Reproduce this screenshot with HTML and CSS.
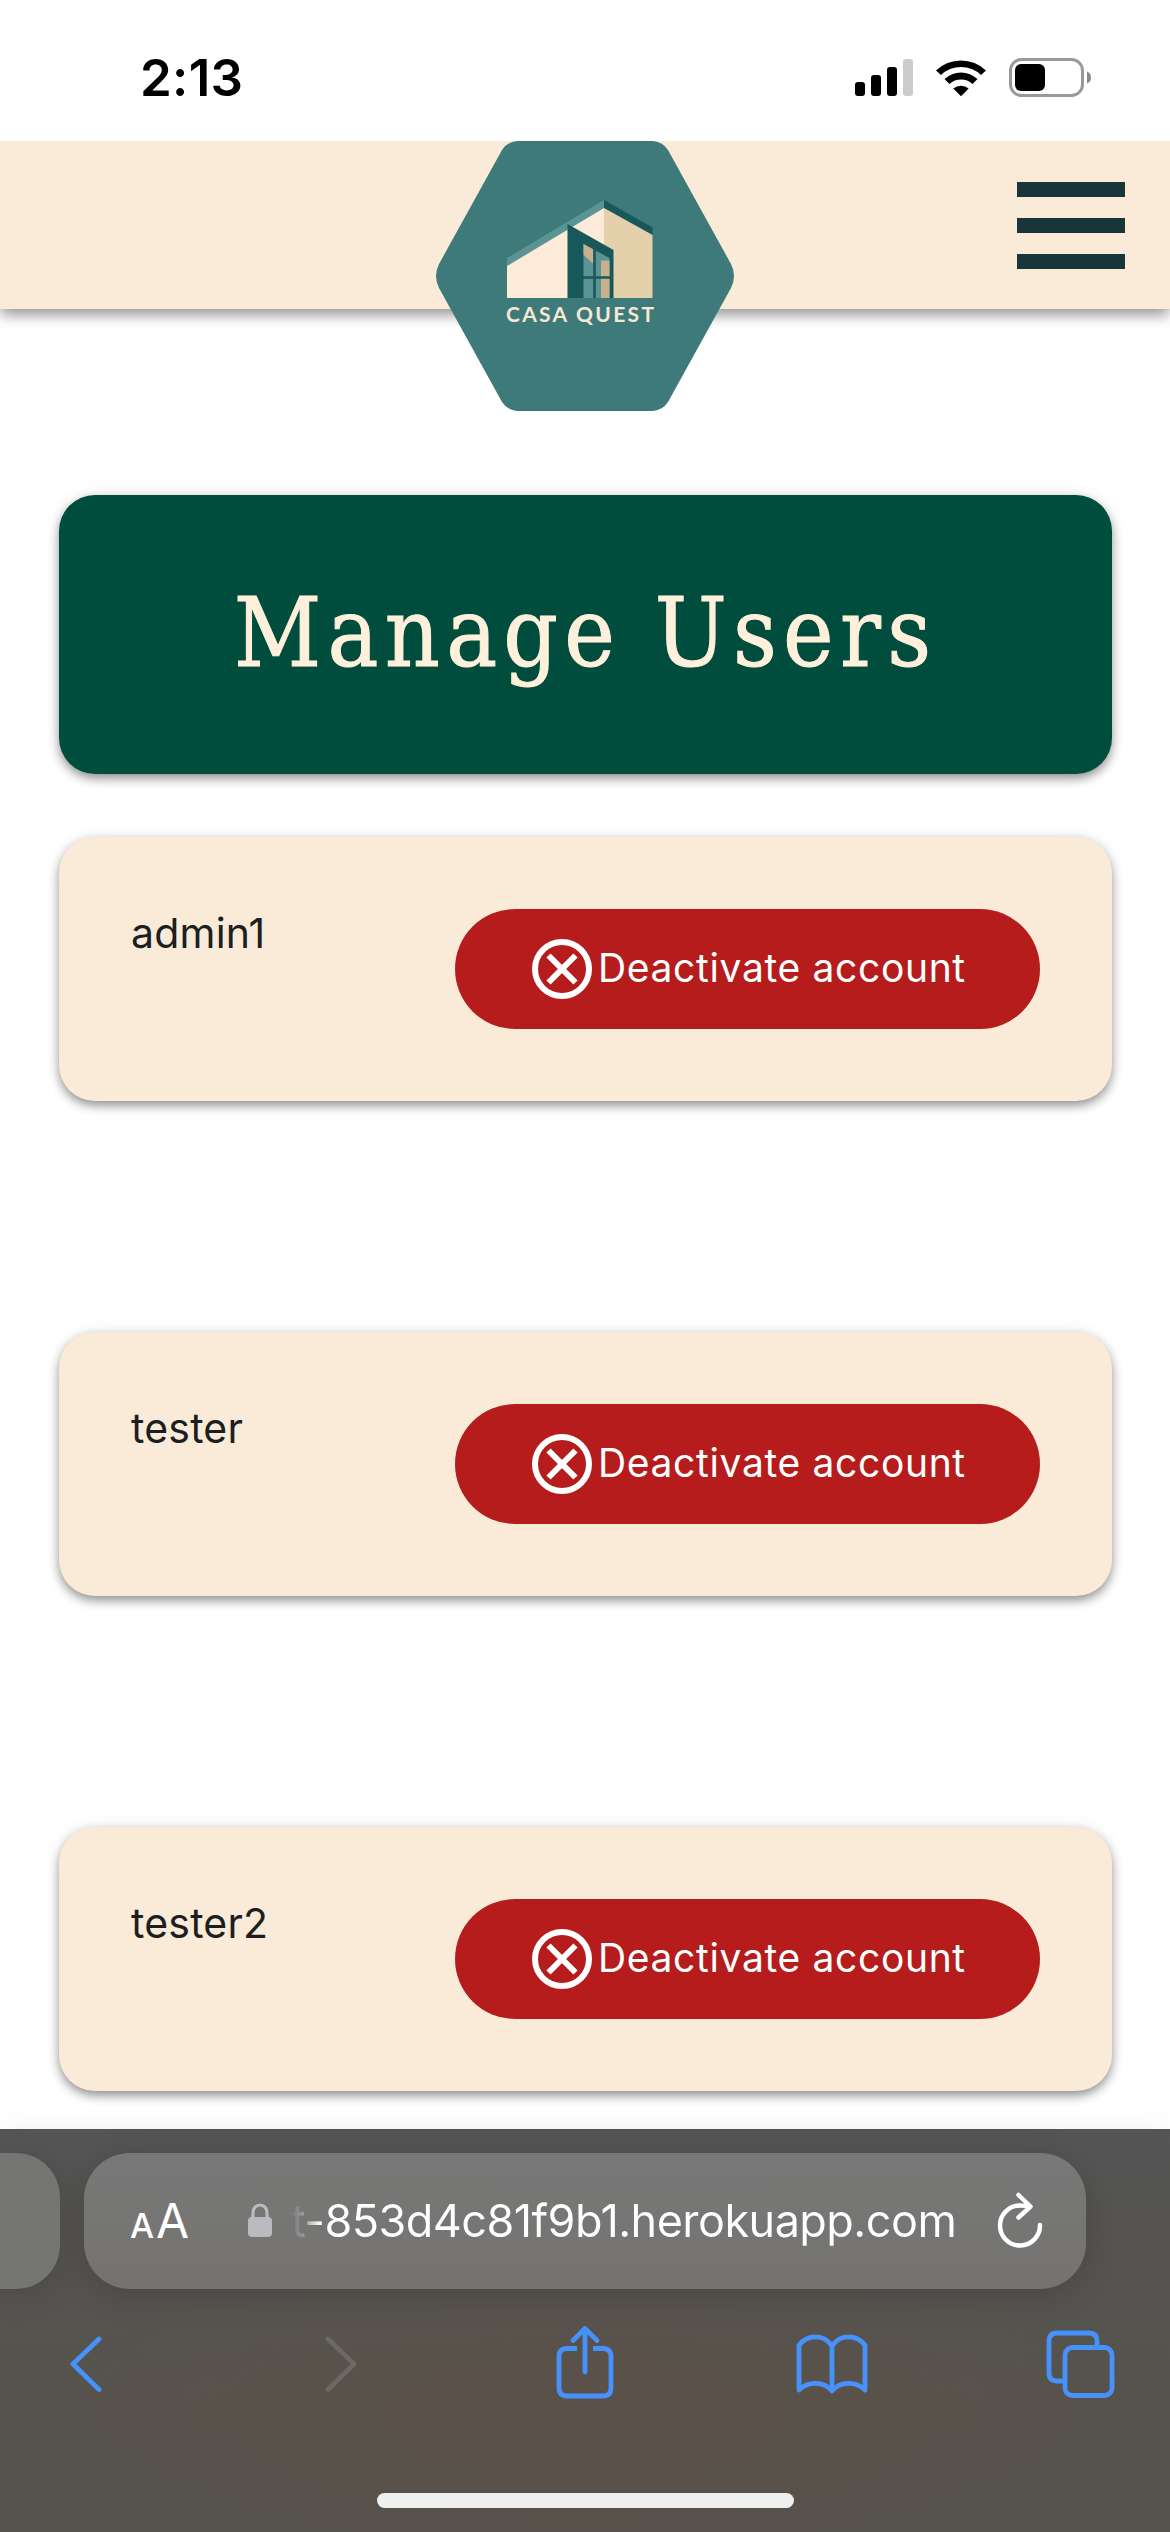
FILE: index.html
```html
<!DOCTYPE html>
<html lang="en">
<head>
<meta charset="utf-8">
<title>Casa Quest – Manage Users</title>
<link rel="stylesheet" href="styles.css">
</head>
<body>
<div class="screen">
  <div class="status-bar">
    <span class="clock">2:13</span>
    <div class="status-icons">
      <svg class="signal" viewBox="0 0 58 38"><rect x="0" y="23" width="10" height="14" rx="3"/><rect x="16" y="16" width="10" height="21" rx="3"/><rect x="32" y="8" width="10" height="29" rx="3"/><rect x="48" y="0" width="10" height="37" rx="3" fill="#ccc"/></svg>
      <svg class="wifi" viewBox="0 0 52 38"><path d="M1 11.5A36 36 0 0 1 51 11.500L46 16A29 29 0 0 0 6 16ZM9.500 20A24 24 0 0 1 42.500 20L37.500 25A17 17 0 0 0 14.500 25ZM18.300 29.500A12.500 12.500 0 0 1 33.700 29.500L26 37.300Z"/></svg>
      <svg class="battery" viewBox="0 0 84 40"><rect x="1.500" y="1.500" width="72" height="36" rx="11" fill="none" stroke="#999" stroke-width="3"/><rect x="6" y="6" width="30" height="27" rx="6"/><path d="M78 13.500Q82 15 82 19.500Q82 24 78 25.500Z" fill="#8a8a8a"/></svg>
    </div>
  </div>

  <header class="site-header">
    <svg class="logo" viewBox="0 0 300 270">
      <path fill="#3f7a7b" d="M82 0H218Q228 1 233 9L296 123Q302 135 296 147L233 261Q228 269 218 270H82Q72 269 67 261L4 147Q-2 135 4 123L67 9Q72 1 82 0Z"/>
      <path fill="#5a9495" d="M72 117L169 59V67L72 126Z"/>
      <path fill="#18575a" d="M169 59L217.500 86.500V94L169 67Z"/>
      <path fill="#fbebd8" d="M72 125L169 67V157H72Z"/>
      <path fill="#e4d0ab" d="M169 67L217.500 94V157H169Z"/>
      <path fill="#18575a" d="M132.500 83L178.500 109V157H132.500Z"/>
      <path fill="#5a9495" d="M148.500 103L174.500 117V157H148.500Z"/>
      <path fill="#c7b18d" d="M148.500 103L158.500 108.500V123L148.500 114ZM166 119.500H174.500V157H166Z"/>
      <path stroke="#18575a" stroke-width="2.600" fill="none" d="M159.500 107V157M148 136.500H175"/>
      <text class="logo-name" x="71" y="181" textLength="148">CASA QUEST</text>
    </svg>
    <div class="menu"><i></i><i></i><i></i></div>
  </header>

  <main class="content">
    <h1 class="page-title">Manage Users</h1>
    <section class="user-card">
      <span class="user-name">admin1</span>
      <button class="deactivate"><svg class="cross" viewBox="0 0 60 60"><circle cx="30" cy="30" r="27"/><path d="M16.500 16.500L43.500 43.500M43.500 16.500L16.500 43.500"/></svg><span>Deactivate account</span></button>
    </section>
    <section class="user-card">
      <span class="user-name">tester</span>
      <button class="deactivate"><svg class="cross" viewBox="0 0 60 60"><circle cx="30" cy="30" r="27"/><path d="M16.500 16.500L43.500 43.500M43.500 16.500L16.500 43.500"/></svg><span>Deactivate account</span></button>
    </section>
    <section class="user-card">
      <span class="user-name">tester2</span>
      <button class="deactivate"><svg class="cross" viewBox="0 0 60 60"><circle cx="30" cy="30" r="27"/><path d="M16.500 16.500L43.500 43.500M43.500 16.500L16.500 43.500"/></svg><span>Deactivate account</span></button>
    </section>
  </main>

  <footer class="browser-bar">
    <div class="tabs-row">
      <div class="previous-tab"></div>
      <div class="address">
        <span class="text-size"><small>A</small>A</span>
        <svg class="lock" viewBox="0 0 24 34"><path d="M5 16V9.500A7 7.500 0 0 1 19 9.500V16" fill="none" stroke="#bbbac0" stroke-width="3.200"/><rect y="14" width="24" height="20" rx="4" fill="#bbbac0"/></svg>
        <span class="url">t-853d4c81f9b1.herokuapp.com</span>
        <svg class="reload" viewBox="0 0 48 58"><path d="M44 35A20 20 0 1 1 24 15.500Q30 15.500 34 17M22.500 5L34.500 16.500L22.500 27.500"/></svg>
      </div>
    </div>
    <nav class="toolbar">
      <svg viewBox="0 0 32 76"><path d="M29 14L3 39L29 64.500"/></svg>
      <svg class="disabled" viewBox="0 0 32 76"><path d="M3 14L29 39L3 64.500"/></svg>
      <svg class="share" viewBox="0 0 58 76"><path d="M21 23.500H11Q3 23.500 3 31.500V63Q3 71 11 71H47Q55 71 55 63V31.500Q55 23.500 47 23.500H37" stroke-linecap="butt"/><path d="M29 47V3.500M17 15.500L29 3.500L41 15.500"/></svg>
      <svg class="book" viewBox="0 0 72 76"><path d="M36 66V21C28 9 12 9 3 20V65C12 56 28 56 36 66C44 56 60 56 69 65V20C60 9 44 9 36 21"/></svg>
      <svg class="pages" viewBox="0 0 70 76"><path d="M18 56H11Q3 56 3 48V16Q3 8 11 8H43Q51 8 51 16V22"/><rect x="19" y="22.500" width="47" height="48" rx="7.500"/></svg>
    </nav>
    <div class="home-indicator"></div>
  </footer>
</div>
</body>
</html>
```
FILE: styles.css
```css
* { box-sizing: border-box; }
body { margin: 0; background: #fff; font-family: Inter, "Liberation Sans", sans-serif; }
svg { display: block; flex: none; }
.screen { width: 1170px; height: 2532px; display: flex; flex-direction: column; overflow: hidden; background: #fff; }

.status-bar { height: 141px; flex: none; display: flex; justify-content: space-between; padding: 47px 77px 0 140px; }
.clock { font-size: 51px; font-weight: 600; line-height: 61px; letter-spacing: .3px; color: #000; }
.status-icons { display: flex; gap: 22px; padding-top: 11px; }
.signal { width: 58px; height: 38px; margin-top: 1px; }
.wifi { width: 52px; height: 38px; margin-top: 1px; }
.battery { width: 84px; height: 40px; }

.site-header { height: 168px; flex: none; display: grid; grid-template-columns: 1fr 300px 1fr; background: #faebd9; box-shadow: 0 6px 12px -3px rgba(0,0,0,.22), 0 9px 12px rgba(0,0,0,.16), 0 3px 15px rgba(0,0,0,.12); clip-path: inset(0 0 -120px 0); position: relative; }
.logo { grid-column: 2; width: 300px; height: 270px; }
.logo-name { font-family: Lato, sans-serif; font-weight: 700; font-size: 21px; fill: #f7e8d3; }
.menu { justify-self: end; margin: 41px 45px 0 0; width: 108px; display: flex; flex-direction: column; gap: 21px; }
.menu i { height: 15px; background: #1a353a; }

.content { height: 1820px; flex: none; padding: 186px 58px 0 59px; }
.page-title { margin: 0 0 63px; height: 279px; border-radius: 36px; background: #004d3e; color: #fff0dc; font-family: "DejaVu Serif Condensed", "DejaVu Serif", serif; font-stretch: condensed; font-weight: 400; font-size: 95px; letter-spacing: 6.300px; line-height: 277px; text-align: center; white-space: nowrap; -webkit-text-stroke: 1px #fff0dc; }
.page-title, .user-card { box-shadow: 0 5px 11px -1px rgba(0,0,0,.42), 0 1px 15px rgba(0,0,0,.1); }
.user-card { height: 264px; margin-bottom: 231px; padding: 72px; border-radius: 36px; background: #faebd9; display: flex; justify-content: space-between; align-items: flex-start; }
.user-name { font-size: 41px; line-height: 48px; letter-spacing: .2px; color: #1c1f20; }
.deactivate { width: 585px; height: 120px; border: 0; border-radius: 60px; padding: 0 0 0 77px; background: #b51c1b; color: #fff; font-family: Inter, sans-serif; font-weight: 400; font-size: 39px; letter-spacing: .65px; display: flex; align-items: center; gap: 6px; white-space: nowrap; }
.cross { width: 60px; height: 60px; fill: none; stroke: #fff; stroke-width: 6; }
.deactivate span { padding-bottom: 4px; }

.browser-bar { position: relative; height: 403px; flex: none; display: flex; flex-direction: column; background: radial-gradient(ellipse 560px 180px at 50% 72%, #5b5149 0, rgba(91,81,73,0) 100%), linear-gradient(#555 0, #555452 30%, #56534c 65%, #54524c 100%); box-shadow: 0 0 24px rgba(0,0,0,.06); }
.tabs-row { display: flex; gap: 24px; padding-top: 24px; height: 160px; }
.previous-tab { width: 60px; height: 136px; border-radius: 0 44px 44px 0; background: #757573; box-shadow: 0 4px 34px rgba(0,0,0,.14); }
.address { width: 1002px; height: 136px; border-radius: 46px; background: linear-gradient(#787878, #747370); box-shadow: 0 4px 34px rgba(0,0,0,.16); display: flex; align-items: center; color: #fff; white-space: nowrap; }
.text-size { margin: 4px 0 0 46px; width: 118px; font-size: 48px; font-weight: 400; line-height: 60px; }
.text-size small { font-size: 34px; margin-right: 2px; font-weight: 500; }
.lock { width: 24px; height: 34px; margin-top: -3px; }
.url { width: 672px; margin-left: 19px; font-size: 45px; line-height: 60px; letter-spacing: -.55px; background: linear-gradient(90deg, #777 0, #999 12px, #fff 30px); -webkit-background-clip: text; background-clip: text; color: transparent; }
.reload { width: 48px; height: 58px; margin: -4px 0 0 33px; fill: none; stroke: #fff; stroke-width: 4.500; stroke-linecap: round; stroke-linejoin: round; }
.toolbar { display: flex; padding: 36px 0 0 70px; }
.toolbar svg { width: 32px; height: 76px; fill: none; stroke: #4791fa; stroke-width: 4.800; stroke-linecap: round; stroke-linejoin: round; }
.toolbar .disabled { stroke: #6b6963; margin-left: 223px; }
.toolbar .share { width: 58px; margin-left: 199px; }
.toolbar .book { width: 72px; margin-left: 182px; }
.toolbar .pages { width: 70px; margin-left: 178px; }
.home-indicator { width: 417px; height: 15px; margin: 92px auto 0; border-radius: 8px; background: #efefef; }
```
